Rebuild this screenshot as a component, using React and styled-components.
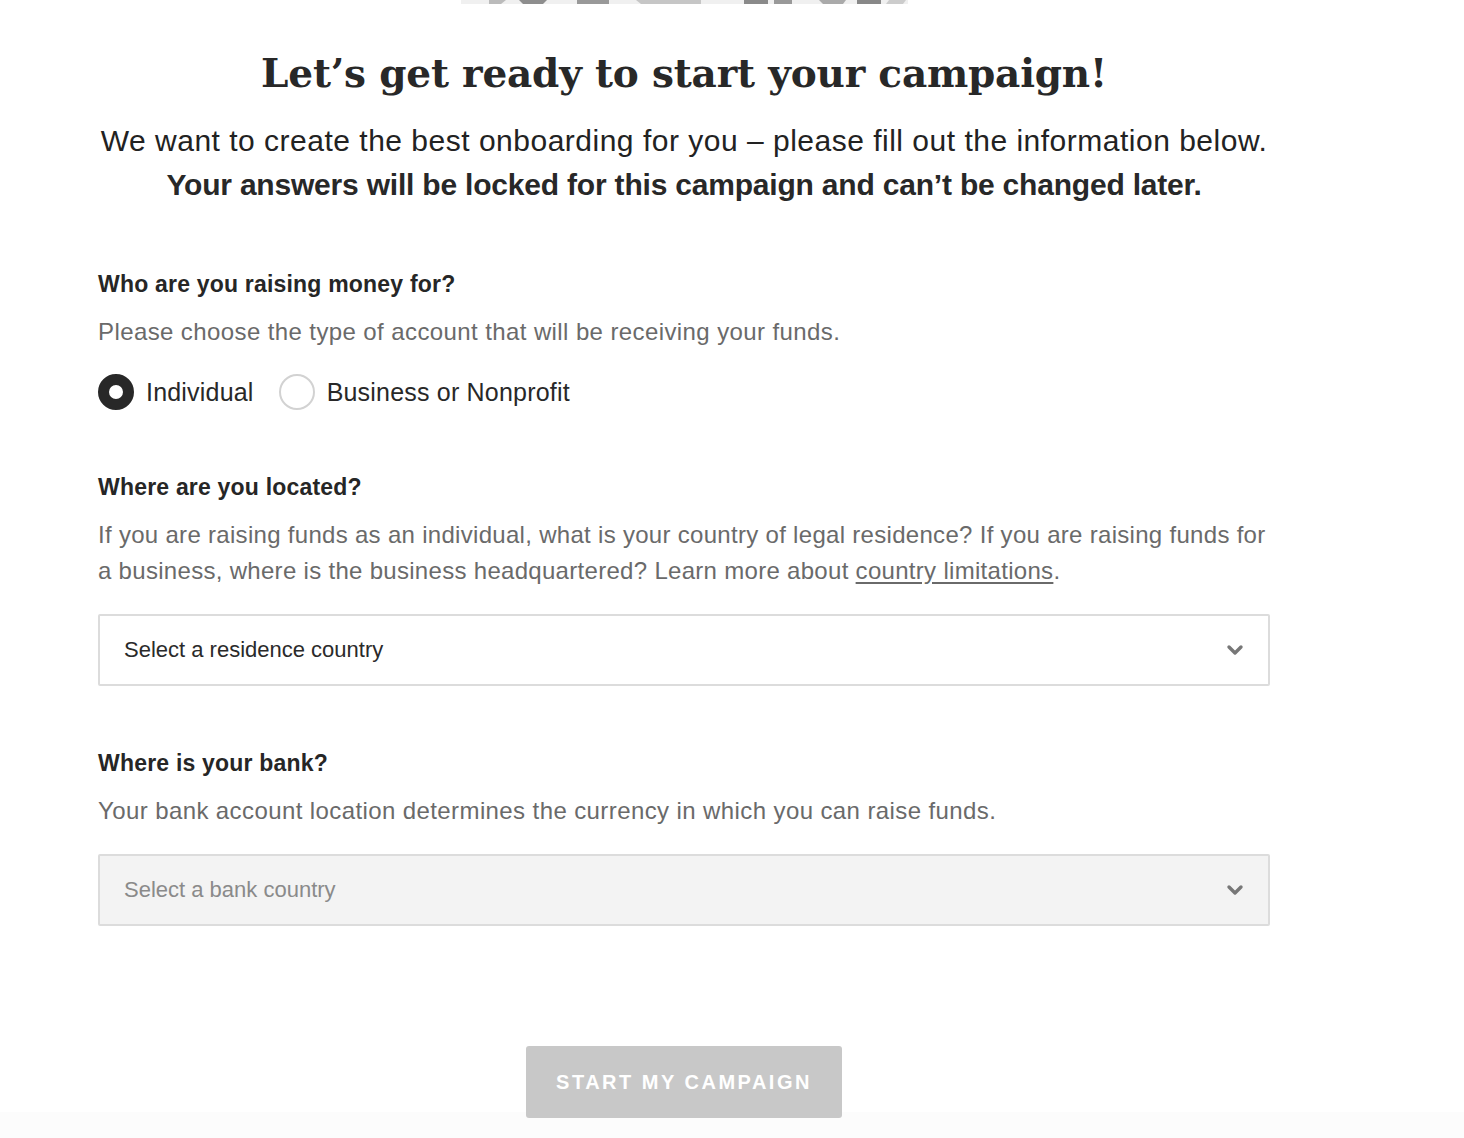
import styled, { createGlobalStyle } from "styled-components";

const GlobalStyle = createGlobalStyle`
  body {
    margin: 0;
    background: #fff;
    font-family: "Liberation Sans", Arial, sans-serif;
    color: #222;
  }
`;

const Chevron = () => (
  <svg width="18" height="12" viewBox="0 0 18 12">
    <polyline
      points="3,3 9,9 15,3"
      fill="none"
      stroke="#777"
      strokeWidth="3.4"
      strokeLinecap="round"
      strokeLinejoin="round"
    />
  </svg>
);

const Banner = () => (
  <svg width="447" height="4" viewBox="0 0 447 4">
    <rect width="447" height="4" fill="#f0f0f0" />
    <polygon points="28,0 45,0 40,4 28,4" fill="#bbb" />
    <polygon points="58,0 86,0 82,4 62,4" fill="#8e8e8e" />
    <rect x="116" y="0" width="32" height="4" fill="#999" />
    <polygon points="175,0 240,0 240,4 180,4" fill="#c6c6c6" />
    <rect x="283" y="0" width="24" height="4" fill="#8a8a8a" />
    <rect x="313" y="0" width="18" height="4" fill="#999" />
    <polygon points="358,0 385,0 382,4 362,4" fill="#aaa" />
    <rect x="396" y="0" width="24" height="4" fill="#888" />
    <polygon points="428,0 445,0 442,4 425,4" fill="#ccc" />
  </svg>
);

const App = () => {
  return (
    <>
      <GlobalStyle />
      <Page>
        <BannerWrap>
          <Banner />
        </BannerWrap>
        <Header>
          <Title>Let’s get ready to start your campaign!</Title>
          <Intro>
            We want to create the best onboarding for you – please fill out the
            information below.
          </Intro>
          <Warning>
            Your answers will be locked for this campaign and can’t be changed
            later.
          </Warning>
        </Header>

        <Section>
          <Label>Who are you raising money for?</Label>
          <Help>Please choose the type of account that will be receiving your funds.</Help>
          <RadioRow>
            <RadioOption>
              <RadioDot checked />
              Individual
            </RadioOption>
            <RadioOption>
              <RadioDot />
              Business or Nonprofit
            </RadioOption>
          </RadioRow>
        </Section>

        <Section>
          <Label>Where are you located?</Label>
          <Help tight>
            If you are raising funds as an individual, what is your country of
            legal residence? If you are raising funds for a business, where is
            the business headquartered? Learn more about{" "}
            <HelpLink href="#">country limitations</HelpLink>.
          </Help>
          <Select>
            <SelectText>Select a residence country</SelectText>
            <Chevron />
          </Select>
        </Section>

        <Section>
          <Label>Where is your bank?</Label>
          <Help>Your bank account location determines the currency in which you can raise funds.</Help>
          <Select disabled>
            <SelectText disabled>Select a bank country</SelectText>
            <Chevron />
          </Select>
        </Section>

        <Actions>
          <StartButton disabled>Start my campaign</StartButton>
        </Actions>
      </Page>
      <Footer />
    </>
  );
};

const Page = styled.div`
  width: 1172px;
  margin-left: 98px;
`;

const BannerWrap = styled.div`
  display: flex;
  justify-content: center;
  height: 4px;
  line-height: 0;
`;

const Header = styled.header`
  text-align: center;
  padding-top: 41px;
`;

const Title = styled.h1`
  margin: 0;
  font-family: "DejaVu Serif", Georgia, serif;
  font-weight: 700;
  font-size: 39px;
  line-height: 56px;
  letter-spacing: -0.2px;
  color: #282828;
`;

const Intro = styled.p`
  margin: 18px 0 0;
  font-size: 30px;
  line-height: 44px;
  letter-spacing: 0.5px;
  color: #222;
`;

const Warning = styled.p`
  margin: 0;
  font-size: 30px;
  line-height: 44px;
  font-weight: 700;
  letter-spacing: -0.2px;
  color: #282828;
`;

const Section = styled.section`
  margin-top: 62px;
`;

const Label = styled.h3`
  margin: 0;
  font-size: 23px;
  line-height: 30px;
  font-weight: 700;
  letter-spacing: 0.2px;
  color: #262626;
`;

const Help = styled.p`
  margin: 15px 0 0;
  font-size: 24px;
  line-height: 36px;
  letter-spacing: ${(p) => (p.tight ? "0.3px" : "0.4px")};
  color: #6a6a6a;
`;

const HelpLink = styled.a`
  color: #6a6a6a;
  text-decoration: underline;
  text-underline-offset: 3px;
`;

const RadioRow = styled.div`
  display: flex;
  align-items: center;
  gap: 25px;
  margin-top: 24px;
`;

const RadioOption = styled.label`
  display: flex;
  align-items: center;
  gap: 12px;
  font-size: 25px;
  letter-spacing: 0.2px;
  color: #282828;
  cursor: pointer;
`;

const RadioDot = styled.span`
  box-sizing: border-box;
  width: 36px;
  height: 36px;
  border-radius: 50%;
  border: ${(p) => (p.checked ? "11px solid #282828" : "2px solid #d2d2d2")};
  background: #fff;
`;

const Select = styled.div`
  box-sizing: border-box;
  height: 72px;
  margin-top: 25px;
  padding: 0 24px;
  display: flex;
  align-items: center;
  justify-content: space-between;
  border: 2px solid #dcdcdc;
  border-radius: 2px;
  background: ${(p) => (p.disabled ? "#f3f3f3" : "#fff")};
`;

const SelectText = styled.span`
  font-size: 22px;
  color: ${(p) => (p.disabled ? "#8a8a8a" : "#2a2a2a")};
`;

const Actions = styled.div`
  display: flex;
  justify-content: center;
  margin-top: 120px;
  margin-bottom: -6px;
  position: relative;
  z-index: 1;
`;

const StartButton = styled.button`
  width: 316px;
  height: 72px;
  border: none;
  border-radius: 3px;
  background: #c8c8c8;
  color: #fff;
  font-family: "Liberation Sans", Arial, sans-serif;
  font-size: 20px;
  font-weight: 700;
  letter-spacing: 2.5px;
  text-transform: uppercase;
`;

const Footer = styled.div`
  height: 40px;
  background: #fcfcfc;
`;

export default App;
